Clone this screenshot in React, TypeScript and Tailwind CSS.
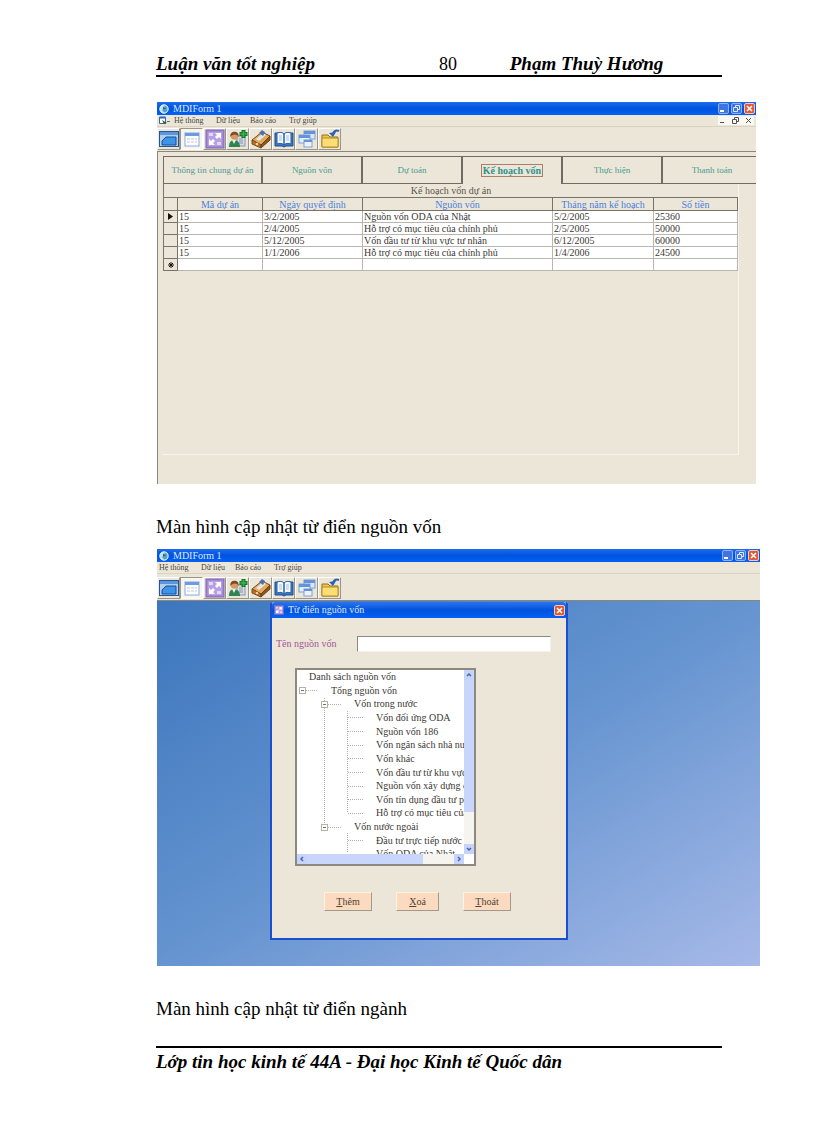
import type { ReactNode } from 'react';

const tabs = ['Thông tin chung dự án', 'Nguồn vốn', 'Dự toán', 'Kế hoạch vốn', 'Thực hiện', 'Thanh toán'];

const plans = [
  ['15', '3/2/2005', 'Nguồn vốn ODA của Nhật', '5/2/2005', '25360'],
  ['15', '2/4/2005', 'Hỗ trợ có mục tiêu của chính phủ', '2/5/2005', '50000'],
  ['15', '5/12/2005', 'Vốn đầu tư từ khu vực tư nhân', '6/12/2005', '60000'],
  ['15', '1/1/2006', 'Hỗ trợ có mục tiêu của chính phủ', '1/4/2006', '24500'],
  ['', '', '', '', ''],
];

const sources = [
  { label: 'Danh sách nguồn vốn', indent: 'pl-[12px]' },
  { label: 'Tổng nguồn vốn', indent: 'pl-[34px]' },
  { label: 'Vốn trong nước', indent: 'pl-[57px]' },
  { label: 'Vốn đối ứng ODA', indent: 'pl-[79px]' },
  { label: 'Nguồn vốn 186', indent: 'pl-[79px]' },
  { label: 'Vốn ngân sách nhà nước', indent: 'pl-[79px]' },
  { label: 'Vốn khác', indent: 'pl-[79px]' },
  { label: 'Vốn đầu tư từ khu vực tư nhân', indent: 'pl-[79px]' },
  { label: 'Nguồn vốn xây dựng cơ bản', indent: 'pl-[79px]' },
  { label: 'Vốn tín dụng đầu tư phát triển', indent: 'pl-[79px]' },
  { label: 'Hỗ trợ có mục tiêu của chính phủ', indent: 'pl-[79px]' },
  { label: 'Vốn nước ngoài', indent: 'pl-[57px]' },
  { label: 'Đầu tư trực tiếp nước ngoài', indent: 'pl-[79px]' },
  { label: 'Vốn ODA của Nhật', indent: 'pl-[79px]' },
];

function AppIcon() {
  return (
    <svg width="10" height="10" viewBox="0 0 10 10" aria-hidden="true">
      <circle cx="5" cy="5" r="4.2" fill="#b9e2f4" stroke="#e9f7ff" />
      <path d="M5 1.500A3.500 3.500 0 0 1 5 8.500L3 6l3-2z" fill="#5b9fc4" />
      <path d="M4 2.500l3 2-3 1z" fill="#24608c" />
    </svg>
  );
}

function LinkIcon({ size }: { size: number }) {
  return (
    <svg width={size} height={size} viewBox="0 0 20 20" aria-hidden="true">
      <rect x="1" y="1" width="18" height="18" fill="#a68ad6" stroke="#7d62b4" />
      <rect x="3" y="3" width="14" height="14" fill="#b79fe4" />
      <path d="M10 4h6v6l-2-2-2 2-2-2 2-2zM4 10l2 2 2-2 2 2-2 2 2 2H4z" fill="#fff" />
      <path d="M4 4h4v3H4zM12 13h4v3h-4z" fill="#e3d8f8" />
    </svg>
  );
}

const tools: { name: string; icon: ReactNode }[] = [
  {
    name: 'Cửa sổ chính',
    icon: (
      <svg width="20" height="20" viewBox="0 0 20 20" aria-hidden="true">
        <rect x="0" y="2" width="20" height="16" fill="#24559c" />
        <rect x="1" y="3" width="18" height="3" fill="#5c97dd" />
        <rect x="1" y="6" width="18" height="11" fill="#b3cdec" />
        <path d="M7 8h10v8H3v-4z" fill="#3d93e8" stroke="#174f96" />
      </svg>
    ),
  },
  {
    name: 'Danh mục',
    icon: (
      <svg width="20" height="20" viewBox="0 0 20 20" aria-hidden="true">
        <rect x="3" y="4" width="14" height="13" fill="#fff" stroke="#84a9df" />
        <rect x="3" y="4" width="14" height="3" fill="#6d9be2" />
        <path d="M5 10h3M9 10h3M13 10h2M5 13h3M9 13h3M13 13h2" stroke="#b6c6df" />
      </svg>
    ),
  },
  { name: 'Nguồn vốn', icon: <LinkIcon size={20} /> },
  {
    name: 'Thêm người dùng',
    icon: (
      <svg width="20" height="20" viewBox="0 0 20 20" aria-hidden="true">
        <rect x="9" y="7" width="8" height="10" fill="#d5dce6" stroke="#8795a8" />
        <path d="M11 10h4M11 12h4M11 14h4" stroke="#8795a8" />
        <path d="M1 18c0-5 2-7 5-7s6 2 6 7z" fill="#2f8450" />
        <path d="M4 11l2 4 2-4z" fill="#e9f1e4" />
        <circle cx="6.500" cy="7" r="3.800" fill="#d79b62" />
        <path d="M2.500 8C1 1 12 1 10.500 8 9 4.500 4 5 2.500 8z" fill="#7b4a26" />
        <path d="M15.500 1v8M11.500 5h8" stroke="#157a2c" strokeWidth="4" />
        <path d="M15.500 2v6M12.500 5h6" stroke="#3bb24a" strokeWidth="1.500" />
      </svg>
    ),
  },
  {
    name: 'Công cụ',
    icon: (
      <svg width="20" height="20" viewBox="0 0 20 20" aria-hidden="true">
        <path d="M1 11 11 3l8 4-9 9z" fill="#e3a959" stroke="#7b4b1c" />
        <path d="M1 11l9 5v3l-9-4z" fill="#b47430" stroke="#7b4b1c" />
        <path d="M10 16l9-9v4l-9 8z" fill="#8d5620" stroke="#6d3f14" />
        <path d="M5 10 12 4l3 2-7 6z" fill="#dfe6ef" />
        <path d="M8 4 11 1l3 2-2 4z" fill="#4d6fb5" />
        <circle cx="6" cy="15" r="1.300" fill="#f2d38a" />
      </svg>
    ),
  },
  {
    name: 'Từ điển',
    icon: (
      <svg width="20" height="20" viewBox="0 0 20 20" aria-hidden="true">
        <path d="M1 4h7l2 1 2-1h7v13h-7l-2 1-2-1H1z" fill="#3c79c2" stroke="#1d4c8c" />
        <path d="M3 4c3-1 5-1 7 1v11c-2-2-4-2-7-1zM17 4c-3-1-5-1-7 1v11c2-2 4-2 7-1z" fill="#f4f8ff" stroke="#2a5fa8" />
        <path d="M5 7h3M5 9h3M5 11h3M12 7h3M12 9h3M12 11h3" stroke="#a9bfdd" />
      </svg>
    ),
  },
  {
    name: 'Xếp cửa sổ',
    icon: (
      <svg width="20" height="20" viewBox="0 0 20 20" aria-hidden="true">
        <rect x="7" y="2" width="11" height="8" fill="#dbe8fa" stroke="#7ba1d8" />
        <rect x="7" y="2" width="11" height="3" fill="#6493da" />
        <rect x="2" y="6" width="11" height="8" fill="#e5eefc" stroke="#7ba1d8" />
        <rect x="2" y="6" width="11" height="3" fill="#6493da" />
        <rect x="7" y="11" width="8" height="7" fill="#edf3fd" stroke="#7ba1d8" />
        <rect x="7" y="11" width="8" height="2" fill="#6493da" />
      </svg>
    ),
  },
  {
    name: 'Thoát chương trình',
    icon: (
      <svg width="20" height="20" viewBox="0 0 20 20" aria-hidden="true">
        <path d="M2 6h6l2 2h8v10H2z" fill="#f1c643" stroke="#99701a" />
        <path d="M2 9h16v9H2z" fill="#fbdf75" stroke="#b48a26" />
        <path d="M13 5c1-3 3-4 6-3" stroke="#2d62b3" strokeWidth="2" fill="none" />
        <path d="M9 4l7-1-3 5z" fill="#2d62b3" />
      </svg>
    ),
  },
];

function CloseButton({ label }: { label: string }) {
  return (
    <button aria-label={label} className="flex size-[11px] items-center justify-center rounded-[2px] border border-[#f3c8bc] bg-[#df5a35]">
      <svg width="7" height="7" viewBox="0 0 7 7" aria-hidden="true">
        <path d="M1 1l5 5M6 1 1 6" stroke="#fff" strokeWidth="1.500" />
      </svg>
    </button>
  );
}

function TitleBar() {
  return (
    <div className="flex h-[13px] items-center justify-between bg-linear-to-b from-[#1c6cf0] via-[#0053dd] to-[#0560f5] px-px">
      <div className="flex items-center gap-1 pl-px text-[10px] leading-3 text-[#dbe9ff]">
        <AppIcon />
        <span>MDIForm 1</span>
      </div>
      <div className="flex gap-[2px]">
        <button aria-label="Thu nhỏ" className="flex size-[11px] items-end rounded-[2px] border border-[#8fb1f5] bg-[#3f74e6] p-px">
          <span className="h-[2px] w-1 bg-white" />
        </button>
        <button aria-label="Khôi phục" className="flex size-[11px] items-center justify-center rounded-[2px] border border-[#8fb1f5] bg-[#3f74e6]">
          <svg width="7" height="7" viewBox="0 0 7 7" fill="none" stroke="#dce8ff" aria-hidden="true">
            <path d="M2.500 2V.5h4v4H5M.5 2.500h4v4h-4z" />
          </svg>
        </button>
        <CloseButton label="Đóng" />
      </div>
    </div>
  );
}

function MenuBar({ child }: { child?: boolean }) {
  return (
    <nav className="flex h-3 items-center justify-between border-b border-[#d8d3c4] px-[2px] text-[8px] leading-[10px] text-[#4a463f]">
      <div className="flex items-center">
        {child && (
          <svg className="mr-1" width="11" height="9" viewBox="0 0 11 9" aria-hidden="true">
            <path d="M.5 1.500h6v6h-6z" fill="#fff" stroke="#3b6f78" />
            <path d="M.5 1.500h6" stroke="#2f65b5" strokeWidth="2" />
            <path d="M3 4l5 3-3 1z" fill="#2b5b50" />
            <path d="M8 5.500h3" stroke="#55776f" />
          </svg>
        )}
        <button className="w-[42px] text-left">Hệ thống</button>
        <button className="w-[34px] text-left">Dữ liệu</button>
        <button className="w-[39px] text-left">Báo cáo</button>
        <button>Trợ giúp</button>
      </div>
      {child && (
        <svg width="36" height="9" viewBox="0 0 36 9" fill="none" stroke="#55524c" aria-hidden="true">
          <rect x="0" y="0" width="36" height="9" fill="#faf8f3" stroke="none" />
          <path d="M2 6.500h4M16.500 3V1.500h4v4H19M14.500 3.500h4v4h-4zM28 2l5 5M33 2l-5 5" />
        </svg>
      )}
    </nav>
  );
}

function ToolBar() {
  return (
    <div className="flex h-6 items-center">
      {tools.map((tool, i) => (
        <button
          key={tool.name}
          aria-label={tool.name}
          className={
            i === 1
              ? 'flex h-[22px] w-[23px] items-center justify-center border border-t-[#9a9587] border-r-white border-b-white border-l-[#9a9587] bg-[#f8f5ee]'
              : 'flex h-[22px] w-[23px] items-center justify-center border border-t-white border-r-[#9a9587] border-b-[#9a9587] border-l-white'
          }
        >
          {tool.icon}
        </button>
      ))}
    </div>
  );
}

function PlanWindow() {
  return (
    <section className="mr-1 ml-px h-[382px] overflow-hidden bg-[#ece6d8]">
      <TitleBar />
      <MenuBar child />
      <ToolBar />
      <div className="h-[333px] border-t border-l border-[#8b867a] pt-1 pl-[5px]">
        <div role="tablist" className="flex h-7 overflow-hidden border-t border-[#6f6c66]">
          {tabs.map((tab) => {
            const active = tab === 'Kế hoạch vốn';
            return (
              <button
                key={tab}
                role="tab"
                aria-selected={active}
                className={
                  active
                    ? 'flex-[0_0_100px] border-r-2 border-[#6f6c66] text-[10px] leading-3 font-bold text-[#2f928c]'
                    : 'flex-[0_0_100px] border-r-2 border-b border-[#6f6c66] text-[9px] leading-3 text-[#4a9c94] first:border-l'
                }
              >
                {active ? <span className="border border-[#a87f6c] px-px">{tab}</span> : tab}
              </button>
            );
          })}
        </div>
        <div className="mr-[17px] h-[271px] border-r border-b border-[#f8f4ea]">
          <table className="w-full table-fixed border-collapse border-l border-[#77736b] text-[10px] leading-[11px] text-[#3b3934]">
            <caption className="h-[13px] border-l border-[#77736b] pt-px text-[#5a554b]">Kế hoạch vốn dự án</caption>
            <colgroup>
              <col className="w-[14px]" />
              <col className="w-[85px]" />
              <col className="w-[100px]" />
              <col />
              <col className="w-[101px]" />
              <col className="w-[84px]" />
            </colgroup>
            <thead>
              <tr className="h-[13px] text-[#4a7fdc]">
                <th className="border border-[#77736b] p-0" aria-label="Dòng" />
                {['Mã dự án', 'Ngày quyết định', 'Nguồn vốn', 'Tháng năm kế hoạch', 'Số tiền'].map((name) => (
                  <th key={name} className="border border-[#77736b] p-0 font-normal">
                    {name}
                  </th>
                ))}
              </tr>
            </thead>
            <tbody>
              {plans.map((row, i) => (
                <tr key={i} className="h-3 bg-white">
                  <th className="border border-[#77736b] bg-[#ece6d8] p-0 text-[9px] leading-[11px] text-black">
                    {i === 0 && (
                      <svg className="mx-auto" width="6" height="7" viewBox="0 0 6 7" aria-hidden="true">
                        <path d="M0 0l5 3.500L0 7z" fill="#111" />
                      </svg>
                    )}
                    {i === 4 && (
                      <svg className="mx-auto" width="6" height="6" viewBox="0 0 6 6" aria-hidden="true">
                        <path d="M3 0v6M0 3h6M1 1l4 4M5 1 1 5" stroke="#111" />
                      </svg>
                    )}
                  </th>
                  {row.map((cell, j) => (
                    <td key={j} className="overflow-hidden border border-[#b9b6b0] p-0 pl-px whitespace-nowrap">
                      {cell}
                    </td>
                  ))}
                </tr>
              ))}
            </tbody>
          </table>
        </div>
      </div>
    </section>
  );
}

function TreeLines() {
  const leaves = [47, 61, 75, 88, 102, 116, 129, 143, 170];
  return (
    <svg className="absolute top-0 left-0" width="80" height="184" viewBox="0 0 80 184" fill="none" stroke="#b5b0a6" aria-hidden="true">
      <g strokeDasharray="1 1">
        <path d="M9 20.500h12M31 34.500h14M31 157.500h14M27.500 28v126M50.500 41v102M50.500 163v20" />
        {leaves.map((y) => (
          <path key={y} d={`M51 ${y + 0.5}h16`} />
        ))}
      </g>
      {[
        [5, 20],
        [27, 34],
        [27, 157],
      ].map(([x, y]) => (
        <g key={y} transform={`translate(${x} ${y})`}>
          <rect x="-2.500" y="-2.500" width="6" height="6" fill="#fff" />
          <path d="M-1 .5h3" stroke="#77736b" />
        </g>
      ))}
    </svg>
  );
}

function ScrollButton({ label, path }: { label: string; path: string }) {
  return (
    <button aria-label={label} className="flex size-[10px] shrink-0 items-center justify-center bg-[#c6d3fb]">
      <svg width="6" height="6" viewBox="0 0 6 6" fill="none" stroke="#4c65a6" strokeWidth="1.500" aria-hidden="true">
        <path d={path} />
      </svg>
    </button>
  );
}

function SourceTree() {
  return (
    <div className="mt-4 ml-[23px] w-[181px] border-2 border-[#8d897e] bg-white">
      <div className="flex h-[184px]">
        <div className="relative min-w-0 flex-1 overflow-hidden">
          <TreeLines />
          <ul role="tree" className="relative grid h-[191px] grid-rows-[repeat(14,1fr)] text-[10px] leading-[13px] text-[#3b3934]">
            {sources.map((source) => (
              <li key={source.label} role="treeitem" className={`whitespace-nowrap ${source.indent}`}>
                {source.label}
              </li>
            ))}
          </ul>
        </div>
        <div className="flex w-[10px] flex-col justify-between bg-[#f6f4ef]">
          <ScrollButton label="Cuộn lên" path="M1 4l2-2 2 2" />
          <span className="mb-auto h-[132px] bg-[#c9d6fc]" />
          <ScrollButton label="Cuộn xuống" path="M1 2l2 2 2-2" />
        </div>
      </div>
      <div className="mr-[10px] flex h-[10px] bg-[#f6f4ef]">
        <ScrollButton label="Cuộn trái" path="M4 1 2 3l2 2" />
        <span className="mr-auto w-[116px] bg-[#c9d6fc]" />
        <ScrollButton label="Cuộn phải" path="M2 1l2 2-2 2" />
      </div>
    </div>
  );
}

function DialogButton({ hotkey, rest, width }: { hotkey: string; rest: string; width: string }) {
  return (
    <button className={`h-[19px] border border-t-[#fff1e0] border-r-[#a09a8c] border-b-[#a09a8c] border-l-[#fff1e0] bg-[#fbdac0] text-[10px] leading-3 text-[#4f4433] ${width}`}>
      <span className="underline">{hotkey}</span>
      {rest}
    </button>
  );
}

function DictionaryWindow() {
  return (
    <section className="ml-px bg-[#ece6d8]">
      <TitleBar />
      <MenuBar />
      <div className="border-b border-[#8b867a] pt-[2px]">
        <ToolBar />
      </div>
      <div className="h-[365px] bg-linear-to-br from-[#3c76bd] via-[#6594d0] to-[#a6b9e8] pt-px pl-[113px]">
        <div role="dialog" aria-labelledby="dialog-title" className="h-[338px] w-[298px] rounded-t-[3px] border-2 border-t-0 border-[#1a4fd0] bg-[#ece6d8]">
          <div className="flex h-4 items-center justify-between rounded-t-[3px] bg-linear-to-b from-[#2b74ee] via-[#0053dd] to-[#0560f5] pr-px pl-[2px]">
            <h2 id="dialog-title" className="flex items-center gap-1 text-[10px] leading-3 text-[#dbe9ff]">
              <LinkIcon size={10} />
              Từ điển nguồn vốn
            </h2>
            <CloseButton label="Đóng từ điển" />
          </div>
          <div className="flex items-center pt-[18px] pr-[15px] pl-1">
            <label htmlFor="source-name" className="w-[81px] text-[10px] leading-3 text-[#a0569a]">
              Tên nguồn vốn
            </label>
            <input id="source-name" type="text" className="h-4 min-w-0 flex-1 border border-t-[#8d897e] border-r-[#f5f1e8] border-b-[#f5f1e8] border-l-[#8d897e] bg-white px-1 text-[10px]" />
          </div>
          <SourceTree />
          <div className="flex gap-6 pt-[26px] pl-[52px]">
            <DialogButton hotkey="T" rest="hêm" width="w-12" />
            <DialogButton hotkey="X" rest="oá" width="w-[43px]" />
            <DialogButton hotkey="T" rest="hoát" width="w-12" />
          </div>
        </div>
      </div>
    </section>
  );
}

export default function App() {
  return (
    <main className="min-h-screen bg-white pt-[53px] pr-14 pl-39 font-['Liberation_Serif',serif] text-black">
      <header className="mr-[38px] flex h-6 items-start border-b-2 border-black text-[19px] leading-[22px]">
        <strong className="w-1/2 italic">Luận văn tốt nghiệp</strong>
        <span className="w-1/8 text-lg leading-[22px]">80</span>
        <strong className="italic">Phạm Thuỳ Hương</strong>
      </header>
      <div className="pt-[25px]">
        <PlanWindow />
      </div>
      <p className="pt-8 pb-[11px] text-[19px] leading-[22px]">Màn hình cập nhật từ điển nguồn vốn</p>
      <DictionaryWindow />
      <p className="pt-8 text-[19px] leading-[22px]">Màn hình cập nhật từ điển ngành</p>
      <footer className="mt-[26px] mr-[38px] border-t-2 border-black pt-[2px] text-[19px] leading-6 font-bold italic">
        Lớp tin học kinh tế 44A - Đại học Kinh tế Quốc dân
      </footer>
    </main>
  );
}
